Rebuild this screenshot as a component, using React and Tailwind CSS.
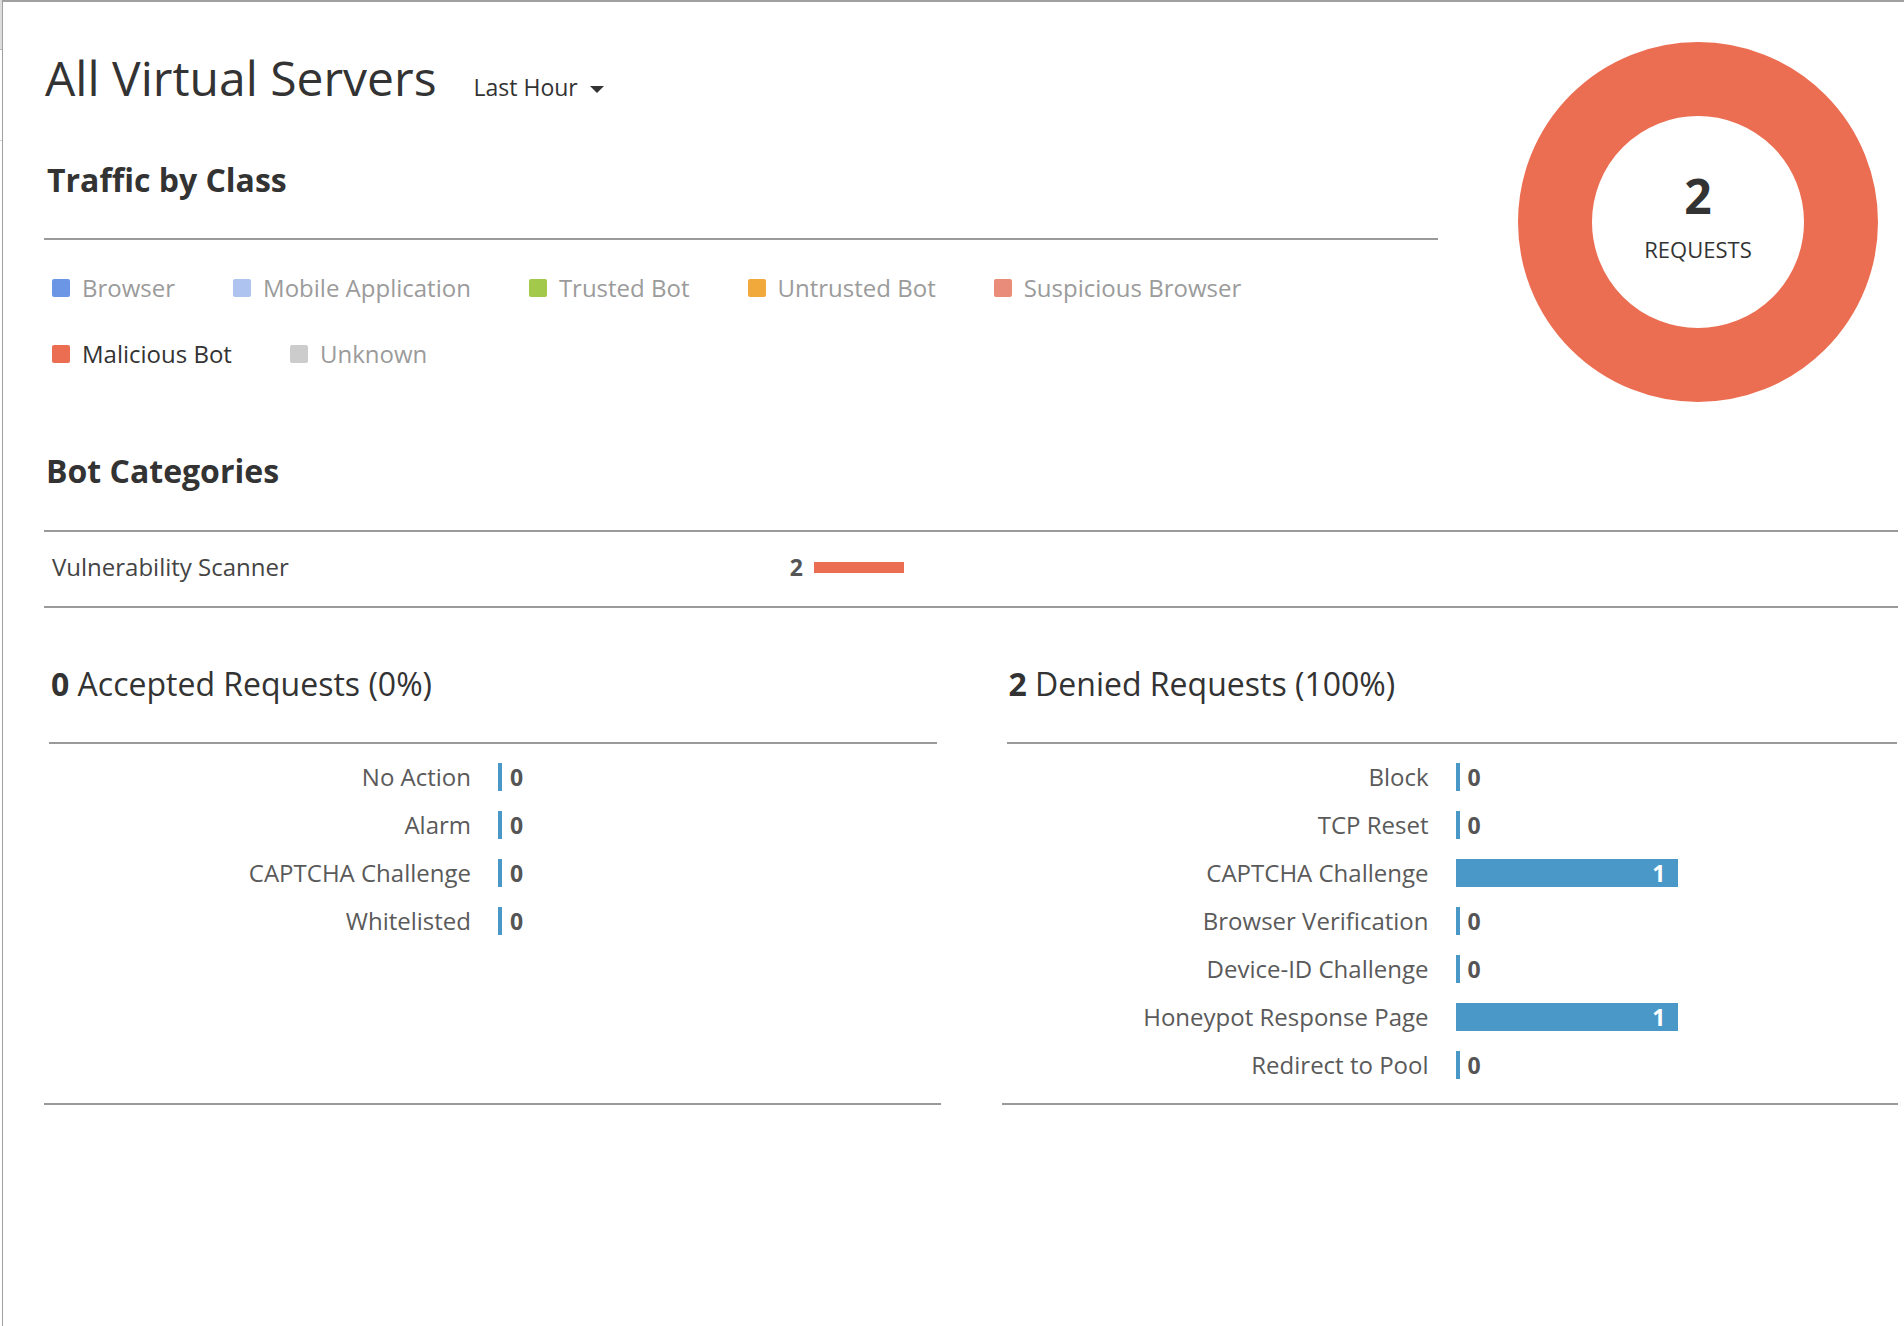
import React from 'react';

const legend = [
  { label: 'Browser', swatch: 'bg-[#6b96e6]' },
  { label: 'Mobile Application', swatch: 'bg-[#aec3f0]' },
  { label: 'Trusted Bot', swatch: 'bg-[#a3c94b]' },
  { label: 'Untrusted Bot', swatch: 'bg-[#f2a93b]' },
  { label: 'Suspicious Browser', swatch: 'bg-[#ea8c7a]' },
  { label: 'Malicious Bot', swatch: 'bg-[#ec6e52]', active: true },
  { label: 'Unknown', swatch: 'bg-[#cccccc]' },
];

const accepted = [
  { label: 'No Action', value: 0 },
  { label: 'Alarm', value: 0 },
  { label: 'CAPTCHA Challenge', value: 0 },
  { label: 'Whitelisted', value: 0 },
];

const denied = [
  { label: 'Block', value: 0 },
  { label: 'TCP Reset', value: 0 },
  { label: 'CAPTCHA Challenge', value: 1 },
  { label: 'Browser Verification', value: 0 },
  { label: 'Device-ID Challenge', value: 0 },
  { label: 'Honeypot Response Page', value: 1 },
  { label: 'Redirect to Pool', value: 0 },
];

const BAR_MAX = 222;

const ActionRow = ({ label, value, max }) => (
  <div className="flex items-center h-[48px]">
    <div className="w-[427px] text-right text-[24px] leading-[24px] text-[#5a5a5a]">{label}</div>
    <div className="ml-[27px] flex items-center">
      {value > 0 ? (
        <div
          className="h-[28px] bg-[#4a98c8] flex items-center justify-end pr-[12px] text-white font-bold text-[23px] leading-[24px]"
          style={{ width: `${Math.round((value / max) * BAR_MAX)}px` }}
        >
          {value}
        </div>
      ) : (
        <>
          <div className="w-[4px] h-[28px] bg-[#4a98c8]" />
          <span className="ml-[8px] font-bold text-[23px] leading-[24px] text-[#555]">{value}</span>
        </>
      )}
    </div>
  </div>
);

const ActionPanel = ({ count, title, pct, rows, headerInset }) => {
  const max = Math.max(1, ...rows.map((r) => r.value));
  return (
    <div className="flex flex-col border-b-2 border-[#9a9a9a] pb-[14px]">
      <div className={`${headerInset} pt-[60px] pb-[42px] pl-[2px] border-b-2 border-[#9a9a9a] text-[32px] leading-[32px] text-[#333]`}>
        <span className="font-bold">{count}</span> {title} ({pct})
      </div>
      <div className="pt-[9px]">
        {rows.map((r) => (
          <ActionRow key={r.label} label={r.label} value={r.value} max={max} />
        ))}
      </div>
    </div>
  );
};

export default function App() {
  return (
    <div className="min-h-screen bg-white flex font-['Open_Sans',sans-serif] text-[#333]">
      {/* edge of neighbouring pane */}
      <div className="w-[2px] flex flex-col">
        <div className="h-[50px] bg-[#dcdcdc] border-b border-[#b5b5b5]" />
        <div className="h-[91px] border-b border-[#d0d0d0]" />
      </div>

      <div className="flex-1 border-l border-t-2 border-[#a0a0a0] pl-[41px] pr-[6px] pt-[40px]">
        {/* top area: title, traffic legend, donut */}
        <div className="flex justify-between items-start">
          <div className="w-[1394px]">
            <div className="flex items-baseline mt-[12px] h-[48px]">
              <h1 className="pl-[1px] text-[48px] leading-[48px] text-[#333]">All Virtual Servers</h1>
              <button className="ml-[37px] flex items-center text-[23px] leading-[23px] text-[#333]">
                Last Hour
                <span className="ml-[12px] mt-[3px] w-0 h-0 border-l-[7px] border-r-[7px] border-t-[7px] border-l-transparent border-r-transparent border-t-[#333]" />
              </button>
            </div>

            <div className="mt-[62px] pl-[3px] pb-[42px] border-b-2 border-[#9a9a9a] text-[32px] leading-[32px] font-bold text-[#333]">
              Traffic by Class
            </div>

            <div className="mt-[36px] pl-[8px] flex flex-wrap gap-x-[58px] gap-y-[42px]">
              {legend.map((item) => (
                <div key={item.label} className="flex items-center gap-3 h-[24px]">
                  <span className={`w-[18px] h-[18px] rounded-[2px] ${item.swatch}`} />
                  <span className={`text-[24px] leading-[24px] ${item.active ? 'text-[#333]' : 'text-[#9b9b9b]'}`}>
                    {item.label}
                  </span>
                </div>
              ))}
            </div>
          </div>

          <div className="mr-[20px] w-[360px] h-[360px] rounded-full border-[74px] border-[#ec6e52] flex flex-col items-center justify-center pb-[12px]">
            <div className="text-[48px] leading-[48px] font-bold text-[#333]">2</div>
            <div className="mt-[18px] text-[22px] leading-[22px] text-[#333]">REQUESTS</div>
          </div>
        </div>

        {/* bot categories */}
        <div className="mt-[53px] pl-[2px] pb-[43px] border-b-2 border-[#9a9a9a] text-[32px] leading-[32px] font-bold text-[#333]">
          Bot Categories
        </div>
        <div className="h-[76px] flex items-center pb-[4px] border-b-2 border-[#9a9a9a]">
          <div className="w-[700px] pl-[8px] text-[24px] leading-[24px] text-[#444]">Vulnerability Scanner</div>
          <div className="w-[59px] text-right font-bold text-[23px] leading-[24px] text-[#555]">2</div>
          <div className="ml-[11px] w-[90px] h-[11px] bg-[#ec6e52]" />
        </div>

        {/* accepted / denied */}
        <div className="grid grid-cols-2 gap-x-[61px]">
          <ActionPanel count={0} title="Accepted Requests" pct="0%" rows={accepted} headerInset="ml-[5px] mr-[4px]" />
          <ActionPanel count={2} title="Denied Requests" pct="100%" rows={denied} headerInset="ml-[5px] mr-[1px]" />
        </div>
      </div>
    </div>
  );
}
